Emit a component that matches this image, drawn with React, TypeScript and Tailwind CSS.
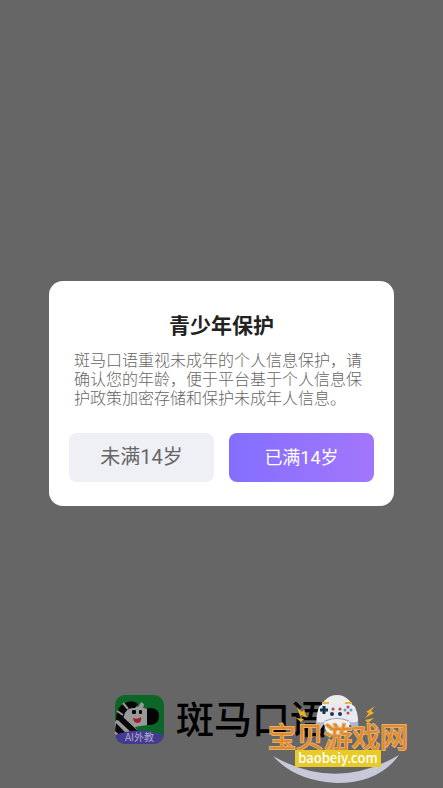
import React from "react";

function AppIcon() {
  return (
    <div className="relative h-[49px] w-[49px] overflow-hidden rounded-[10px] bg-[#0b6628]">
      <svg viewBox="0 0 49 49" className="absolute inset-0 h-full w-full" aria-hidden="true">
        <path d="M0 27 L5 20 Q10 12 19 11 L33 14 V30 Q25 31 20 32 L27 42 L0 45Z" fill="#999999" />
        <path d="M1 25 Q1 12 10 8 Q18 4 23 9 L20 13 Q11 12 9 21 L6 26Z" fill="#060606" />
        <path d="M8 8 L13 14 M2 16 L8 20" stroke="#999999" strokeWidth="2" />
        <path d="M22 14 L26 7 L29 9 L28 14Z" fill="#999999" />
        <rect x="17" y="15" width="4" height="4" rx="1" fill="#080808" />
        <rect x="24" y="15" width="3" height="4" rx="1" fill="#080808" />
        <path d="M32 13 H37 Q44 14 44 21 Q44 29 36 30 H32Z" fill="#050505" />
        <path d="M7 21 L25 38 L19 40 L4 26Z M1 28 L15 42 H7 L0 36Z" fill="#080808" />
        <path d="M18 23 Q22 25 26 22 Q27 28 22 28 Q18 27 18 23Z" fill="#a51e2b" />
        <path d="M0 40 Q24 31 49 40 V49 H0Z" fill="#443b91" />
      </svg>
      <span className="absolute inset-x-0 bottom-px text-center text-[10px] leading-3 text-[#b0aac8]">AI外教</span>
    </div>
  );
}

function Watermark() {
  return (
    <div className="absolute right-[34px] bottom-0.5 flex h-[89px] w-[142px] flex-col items-center">
      <svg viewBox="0 0 142 89" className="absolute inset-0 h-full w-full" aria-hidden="true">
        <path d="M6 61 Q69 97 132 60 Q112 88 70 88 Q28 86 6 61Z" fill="#c8c9d8" />
        <ellipse cx="70" cy="18" rx="17" ry="18" fill="#ededed" />
        <path d="M50 36 Q48 22 52 12 Q54 9 60 9 Q70 8 80 9 Q86 9 88 12 Q93 23 90 36 Q85 34 82 26 Q70 21 58 26 Q55 34 50 36Z" fill="#e9e9f0" />
        <path d="M49 26 Q48 32 50 36 Q55 34 58 26 Q54 29 49 26Z M91 26 Q92 32 90 36 Q85 34 82 26 Q86 29 91 26Z" fill="#b4b4c8" />
        <path d="M58 26 Q70 21 82 26" fill="none" stroke="#9c9cb3" />
        <ellipse cx="70" cy="32" rx="12" ry="8" fill="#f1f1f1" />
        <path d="M55 8h7M78 8h7" stroke="#e4b54b" strokeWidth="2" />
        <path d="M57 11v8M53 15h8" stroke="#18364b" strokeWidth="3" />
        <g fill="#c34450"><circle cx="81" cy="12" r="1.5" /><circle cx="81" cy="18" r="1.5" /><circle cx="66" cy="14" r="1.5" /><circle cx="73" cy="14" r="1.5" /></g>
        <g fill="#4fa6bb"><circle cx="78" cy="15" r="1.5" /><circle cx="84" cy="15" r="1.5" /></g>
        <g fill="#193c50"><circle cx="65" cy="19" r="2" /><circle cx="73" cy="19" r="2" /></g>
        <path d="M30 12l5 5 2-2 3 8-5-3-2 1Z M108 11l-9 6 3 1-4 5 9-5-3-2Z M29 23l8 1-3 3Z M107 23l-9 2 3 3Z" fill="#edb022" />
      </svg>
      <span className="relative mt-[27px] text-[28px] leading-7 whitespace-nowrap text-[#e38a25] [-webkit-text-stroke:2px_#e0ad72] [paint-order:stroke_fill]">宝贝游戏网</span>
      <span className="relative h-[17px] w-[86px] bg-[#e8cb27] text-center text-[13px] leading-[16px] font-medium text-white">baobeiy.com</span>
    </div>
  );
}

export default function App() {
  return (
    <main className="grid min-h-screen grid-rows-[1fr_auto_1fr] bg-[#666666] pb-0.5 font-['Noto_Sans_CJK_SC',sans-serif]">
      <section role="dialog" aria-modal="true" aria-labelledby="title" className="row-start-2 mx-[49px] rounded-[14px] bg-white px-5 pt-[31px] pb-6">
        <h1 id="title" className="text-center text-[21px] leading-6 font-bold text-[#222222]">青少年保护</h1>
        <p className="mx-[5px] mt-[14px] text-[16px] leading-[19px] font-light text-[#666666]">
          斑马口语重视未成年的个人信息保护，请确认您的年龄，便于平台基于个人信息保护政策加密存储和保护未成年人信息。
        </p>
        <div className="mt-[26px] grid grid-cols-2 gap-[15px] font-['Roboto','Noto_Sans_CJK_SC',sans-serif]">
          <button type="button" className="h-[49px] rounded-lg bg-[#eff0f5] text-[20px] text-[#666666]">未满14岁</button>
          <button type="button" className="h-[49px] rounded-lg bg-linear-to-r from-[#846eff] to-[#a276fb] text-[18px] text-white">已满14岁</button>
        </div>
      </section>
      <footer className="relative row-start-3 flex items-end justify-center pb-[42px]">
        <div className="flex items-start gap-3">
          <AppIcon />
          <span className="text-[38px] leading-[44px] font-medium text-black">斑马口语</span>
        </div>
        <Watermark />
      </footer>
    </main>
  );
}
